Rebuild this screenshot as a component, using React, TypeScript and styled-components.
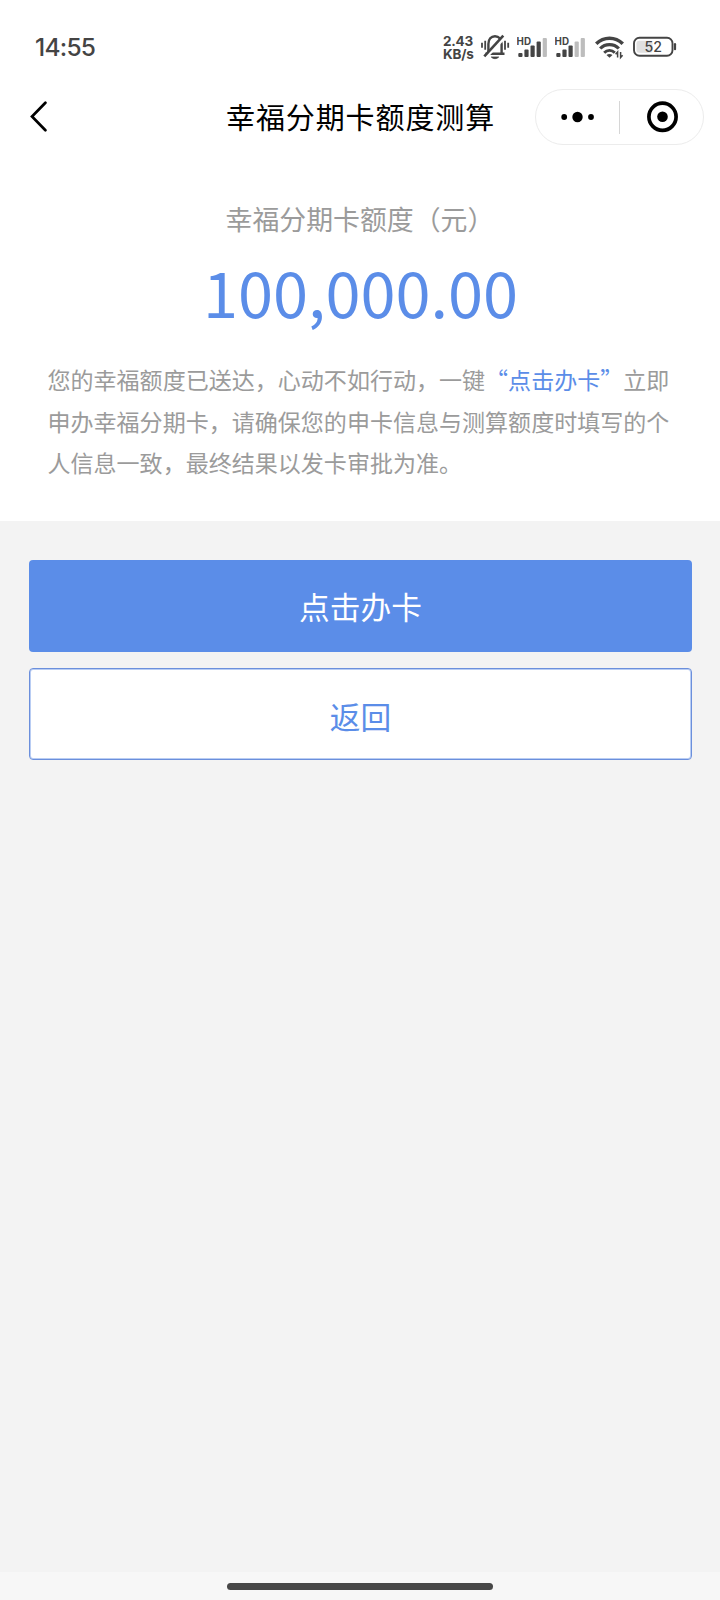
import React from "react";
import styled, { createGlobalStyle } from "styled-components";

const GlobalStyle = createGlobalStyle`
  *, *::before, *::after { box-sizing: border-box; }
  body { margin: 0; background: #f3f3f3; }
`;

const BLUE = "#5b8de8";
const INK = "#444444";

const Screen = styled.div`
  display: flex;
  flex-direction: column;
  width: 720px;
  height: 1600px;
  overflow: hidden;
  background: #f3f3f3;
  font-family: "Noto Sans CJK SC", "Noto Sans", sans-serif;
`;

const StatusBar = styled.header`
  display: flex;
  align-items: center;
  justify-content: space-between;
  height: 78px;
  padding: 16px 43px 0 35px;
  background: #fff;
  color: ${INK};
  font-family: Inter, sans-serif;
`;

const Clock = styled.time`
  font-size: 24.5px;
  font-weight: 500;
  line-height: 30px;
  letter-spacing: -0.75px;
`;

const StatusIcons = styled.div`
  display: flex;
  align-items: center;
  height: 30px;
`;

const NetSpeed = styled.div`
  display: flex;
  flex-direction: column;
  width: 38px;
  padding-top: 1px;
  font-size: 13.5px;
  font-weight: 700;
  line-height: 12.6px;
  letter-spacing: -0.2px;
  white-space: nowrap;
`;

const StatusGlyph = styled.svg<{ $gap?: number }>`
  display: block;
  flex: none;
  margin-right: ${(p) => p.$gap ?? 0}px;
`;

const NavBar = styled.nav`
  display: grid;
  grid-template-columns: 226px 1fr 169px;
  align-items: center;
  height: 78px;
  padding: 0 16px 0 0;
  background: #fff;
`;

const BackButton = styled.button`
  display: flex;
  align-items: center;
  height: 56px;
  padding: 0 0 0 28px;
  border: 0;
  background: none;
`;

const Title = styled.h1`
  margin: 0 0 3px;
  color: #000;
  font-size: 29px;
  font-weight: 400;
  line-height: 44px;
  letter-spacing: 0.9px;
  white-space: nowrap;
`;

const Capsule = styled.div`
  display: grid;
  grid-template-columns: 83px 1px 1fr;
  align-items: center;
  justify-items: center;
  height: 56px;
  border: 1px solid #ececec;
  border-radius: 28px;
`;

const CapsuleDivider = styled.span`
  width: 1px;
  height: 33px;
  background: #d6d6d6;
`;

const Summary = styled.section`
  height: 365px;
  padding: 43px 47.5px 0;
  background: #fff;
  color: #9b9b9b;
`;

const AmountLabel = styled.div`
  padding-left: 178px;
  font-size: 26.88px;
  line-height: 40px;
  white-space: nowrap;
`;

const Amount = styled.div`
  margin-top: 12px;
  padding-left: 1px;
  color: ${BLUE};
  font-size: 63.1px;
  line-height: 80px;
  text-align: center;
`;

const Notice = styled.p`
  margin: 28px 0 0;
  font-size: 23.04px;
  line-height: 41.6px;
  white-space: nowrap;
`;

const Highlight = styled.span`
  color: ${BLUE};
`;

const Actions = styled.main`
  display: flex;
  flex: 1;
  flex-direction: column;
  gap: 16px;
  padding: 39px 28px 0 29px;
`;

const ActionButton = styled.button<{ $outlined?: boolean }>`
  height: 92px;
  padding: ${(p) => (p.$outlined ? "3px 0 0" : "0 0 1px")};
  border: ${(p) => (p.$outlined ? "1px solid #6b8fdc" : "0")};
  border-radius: 4px;
  background: ${(p) => (p.$outlined ? "#fff" : BLUE)};
  box-shadow: ${(p) => (p.$outlined ? "inset 0 0 0 1px #b9cdf3" : "none")};
  color: ${(p) => (p.$outlined ? BLUE : "#fff")};
  font-family: inherit;
  font-size: 30.72px;
  line-height: 46px;
`;

const HomeArea = styled.footer`
  display: flex;
  justify-content: center;
  height: 28px;
  padding-top: 11px;
  background: #f7f7f7;
`;

const HomeIndicator = styled.span`
  width: 266px;
  height: 6.5px;
  border-radius: 4px;
  background: #474747;
`;

function MutedBell() {
  return (
    <StatusGlyph width="30" height="30" viewBox="0 0 30 30" fill="none" stroke={INK} strokeWidth="2.4" $gap={6}>
      <path d="M4.500 21.700h19M7.400 21.500V12C7.400 7.200 10 4.200 14 4.200s6.600 3 6.600 7.800V21.500" />
      <path d="M5.500 24.800 24 5" stroke="#fff" strokeWidth="3" />
      <path d="M3.300 24.300 22.300 3.600" strokeWidth="2.600" />
      <path d="M10.300 25h7.400c-2 2.200-5.400 2.200-7.400 0z" fill={INK} strokeWidth="0.800" />
      <path d="M1 10.800v5M4.200 8.800v9M27.200 10.800v5M24 8.800v9" strokeWidth="1.800" />
    </StatusGlyph>
  );
}

function Signal({ active, gap }: { active: number; gap: number }) {
  const heights = [4, 7.5, 11.5, 15.5, 19];
  return (
    <StatusGlyph width="32" height="30" viewBox="0 0 32 30" $gap={gap}>
      <text x="-0.4" y="12.500" fontSize="9.800" fontWeight="700" fill={INK}>
        HD
      </text>
      {heights.map((h, i) => (
        <rect
          key={h}
          x={1.3 + i * 6.1}
          y={25 - h}
          width="4.200"
          height={h}
          rx="1"
          fill={i < active ? INK : "#bdbdbd"}
        />
      ))}
    </StatusGlyph>
  );
}

function Wifi() {
  return (
    <StatusGlyph width="29" height="30" viewBox="0 0 29 30" fill="none" stroke={INK} $gap={9}>
      <path d="M1.200 11.800C8.800 4.400 20.200 4.400 27.800 11.800" strokeWidth="3.600" />
      <path d="M5.200 16.500c5-5.200 13.600-5.200 18.600 0" strokeWidth="3.200" />
      <path d="M9.200 20.800c2.900-3.200 7.700-3.200 10.600 0" strokeWidth="2.800" />
      <path d="M14.500 25.800l-3-2.800c1.700-1.500 4.300-1.500 6 0z" fill={INK} stroke="none" />
      <path d="M22.600 25.500v-5.500l-2 2.300M25.600 20v5.500l2-2.300" strokeWidth="1.500" />
    </StatusGlyph>
  );
}

function Battery() {
  return (
    <StatusGlyph width="44" height="30" viewBox="0 0 44 30">
      <rect x="3.500" y="8.800" width="16" height="12" rx="2.500" fill="#e0e0e0" />
      <rect x="1" y="5.800" width="38.500" height="18" rx="5.500" fill="none" stroke={INK} strokeWidth="1.900" />
      <path d="M42 12.200v5" stroke={INK} strokeWidth="2.200" strokeLinecap="round" />
      <text x="20.200" y="20" fontSize="14.200" fontWeight="500" textAnchor="middle" fill={INK}>
        52
      </text>
    </StatusGlyph>
  );
}

export default function App() {
  return (
    <Screen>
      <GlobalStyle />
      <StatusBar>
        <Clock>14:55</Clock>
        <StatusIcons>
          <NetSpeed>
            <span>2.43</span>
            <span>KB/s</span>
          </NetSpeed>
          <MutedBell />
          <Signal active={4} gap={6} />
          <Signal active={3} gap={8} />
          <Wifi />
          <Battery />
        </StatusIcons>
      </StatusBar>

      <NavBar>
        <BackButton aria-label="返回">
          <svg width="22" height="32" viewBox="0 0 22 32" fill="none" stroke="#000" strokeWidth="2.700">
            <path d="M17.400 1.800 4 15.500 17.400 29.200" strokeLinecap="round" />
          </svg>
        </BackButton>
        <Title>幸福分期卡额度测算</Title>
        <Capsule>
          <svg width="34" height="12" viewBox="0 0 34 12">
            <circle cx="3.200" cy="6" r="2.900" />
            <circle cx="16.500" cy="6" r="5.200" />
            <circle cx="30" cy="6" r="2.900" />
          </svg>
          <CapsuleDivider />
          <svg width="32" height="32" viewBox="0 0 32 32">
            <circle cx="16.500" cy="15.800" r="13.600" fill="none" stroke="#000" strokeWidth="3.700" />
            <circle cx="16.500" cy="15.800" r="5.300" />
          </svg>
        </Capsule>
      </NavBar>

      <Summary>
        <AmountLabel>幸福分期卡额度（元）</AmountLabel>
        <Amount>100,000.00</Amount>
        <Notice>
          您的幸福额度已送达，心动不如行动，一键<Highlight>“点击办卡”</Highlight>立即
          <br />
          申办幸福分期卡，请确保您的申卡信息与测算额度时填写的个
          <br />
          人信息一致，最终结果以发卡审批为准。
        </Notice>
      </Summary>

      <Actions>
        <ActionButton>点击办卡</ActionButton>
        <ActionButton $outlined>返回</ActionButton>
      </Actions>

      <HomeArea>
        <HomeIndicator />
      </HomeArea>
    </Screen>
  );
}
